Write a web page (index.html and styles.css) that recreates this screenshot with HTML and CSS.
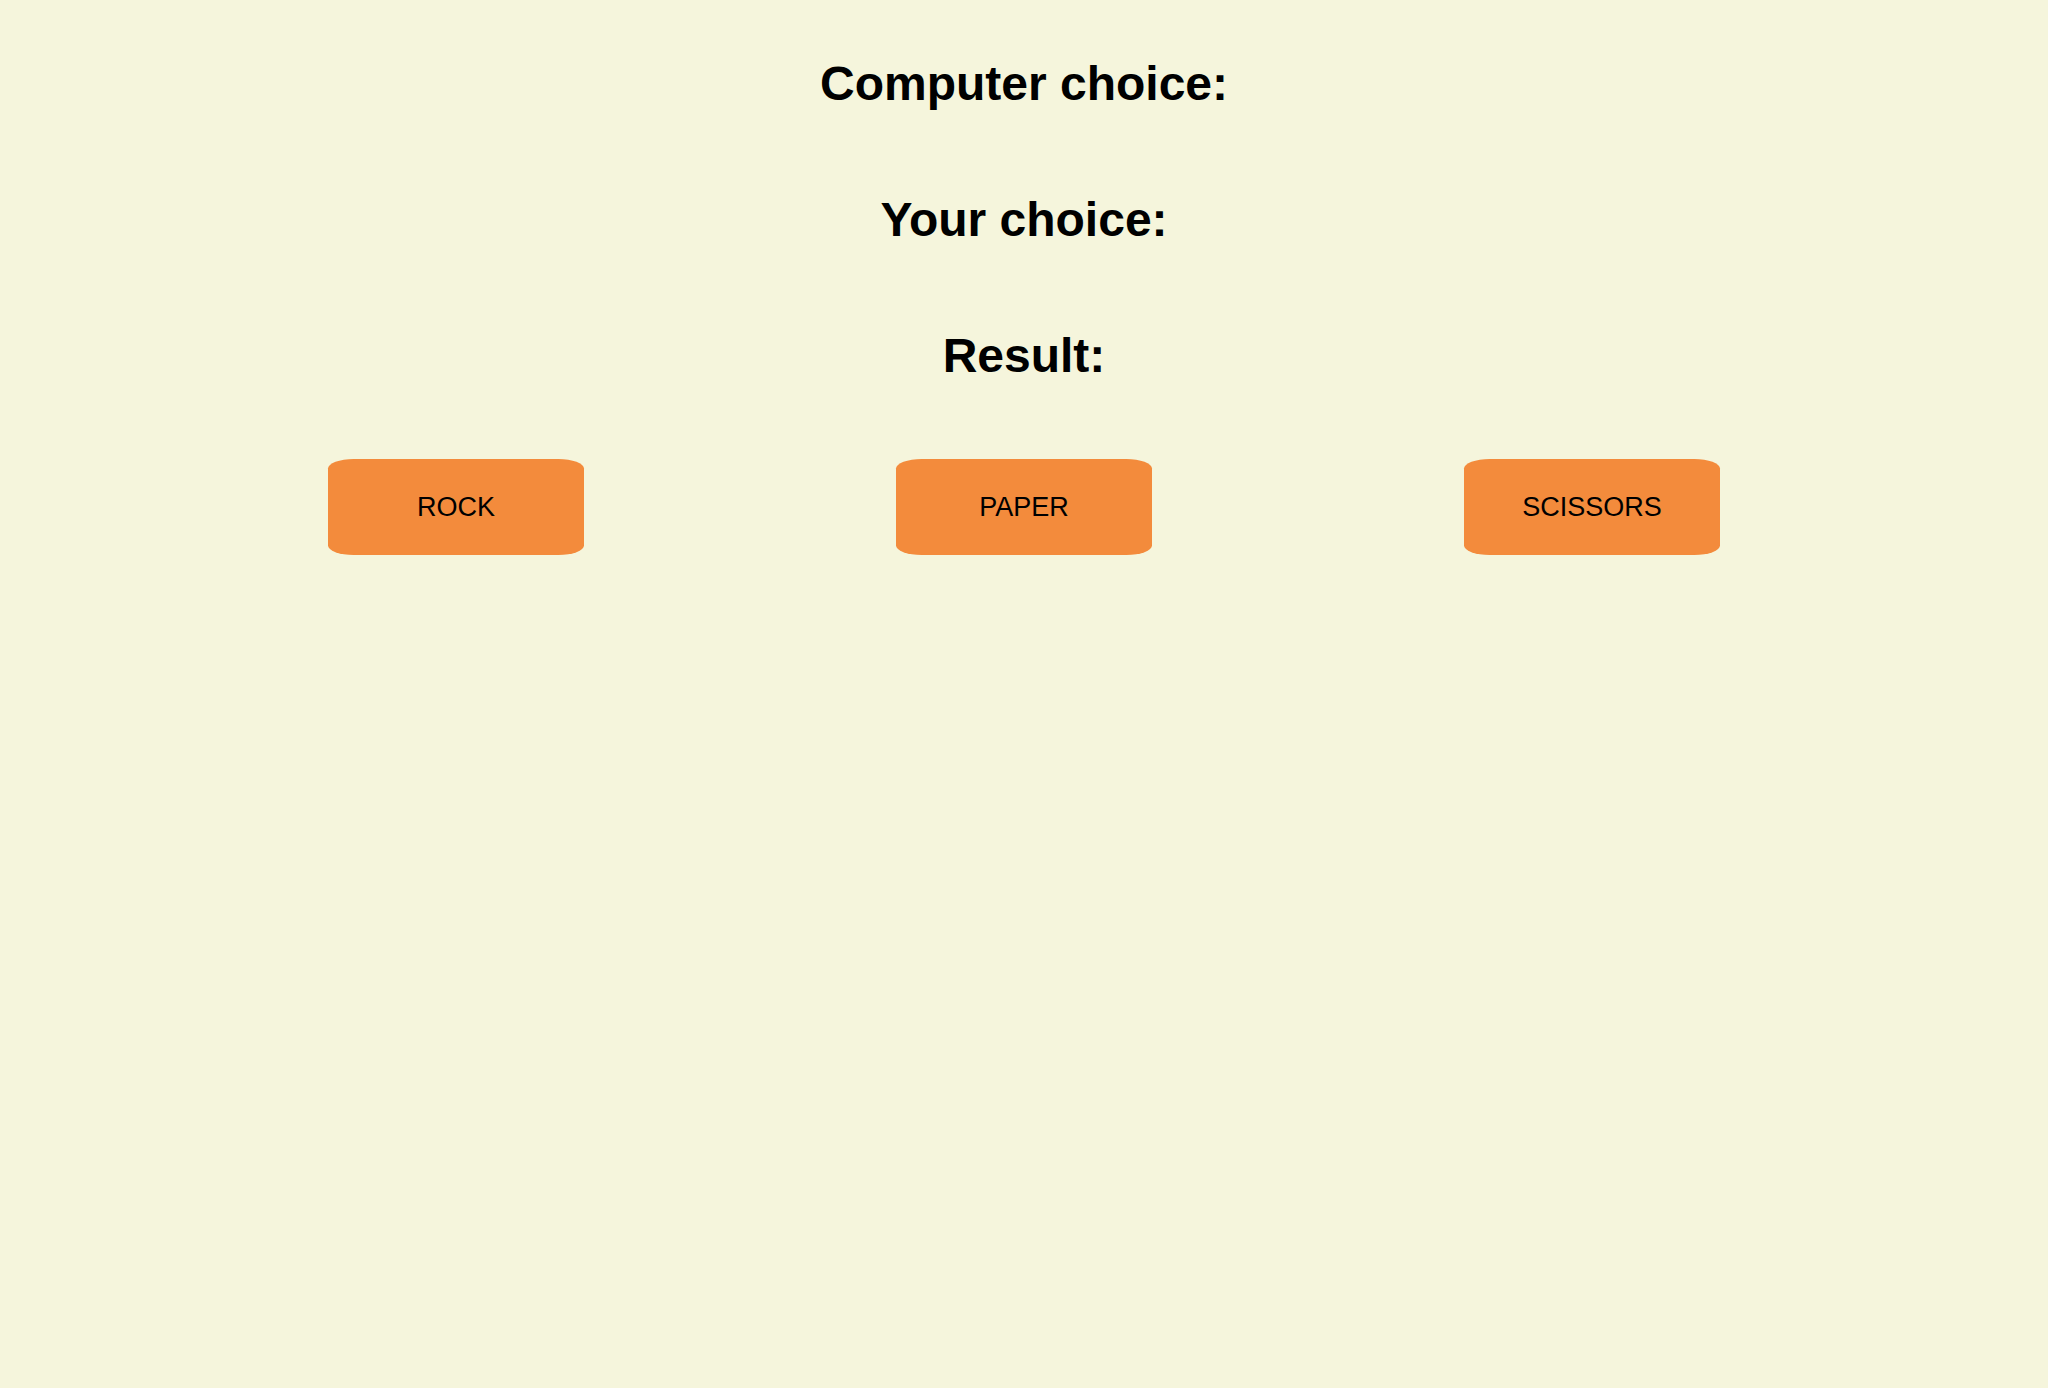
FILE: index.html
```html
<!DOCTYPE html>
<html>
<head>
<meta charset="utf-8">
<link rel="stylesheet" href="styles.css">
</head>
<body>
  <div class="board">
    <h1 class="line">Computer choice: <span class="value"></span></h1>
    <h1 class="line">Your choice: <span class="value"></span></h1>
    <h1 class="line">Result: <span class="value"></span></h1>
  </div>
  <div class="choices">
    <button class="choice">ROCK</button>
    <button class="choice">PAPER</button>
    <button class="choice">SCISSORS</button>
  </div>
</body>
</html>
```

FILE: styles.css
```css
html, body {
  background: #f5f5dc;
}
body {
  margin: 8px;
  font-family: "Liberation Sans", Arial, Helvetica, sans-serif;
  color: #000;
}
.board {
  display: flex;
  flex-direction: column;
  align-items: center;
  gap: 80px;
  padding-top: 48px;
}
.line {
  margin: 0;
  font-size: 48px;
  line-height: 56px;
  font-weight: bold;
  text-align: center;
}
.choices {
  display: flex;
  justify-content: space-evenly;
  padding: 0 8px;
  margin-top: 75px;
}
.choice {
  width: 256px;
  height: 96px;
  border: none;
  border-radius: 10%;
  background: #f38b3c;
  color: #000;
  font-family: "Liberation Sans", Arial, Helvetica, sans-serif;
  font-size: 27px;
  padding: 0;
}
```
